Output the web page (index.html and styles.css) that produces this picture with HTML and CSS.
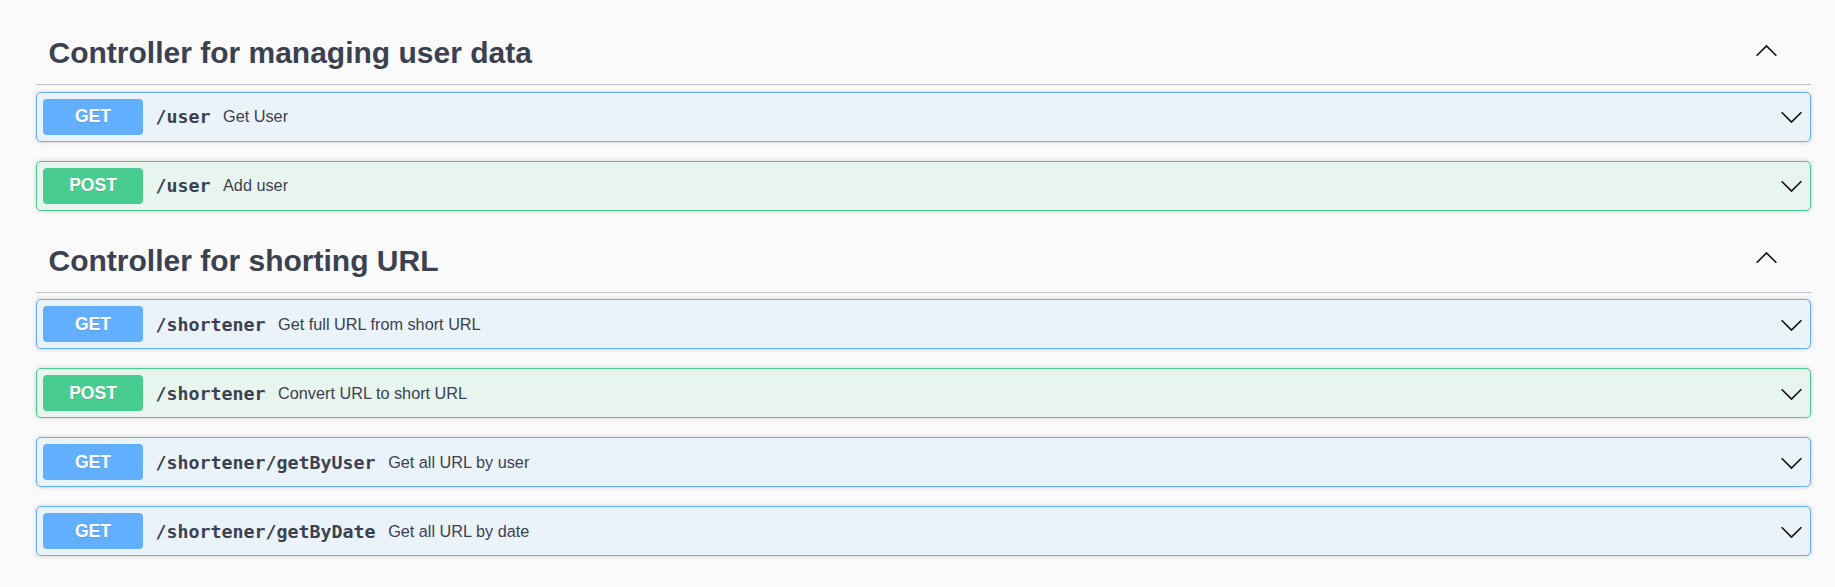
FILE: index.html
```html
<!DOCTYPE html>
<html lang="en">
<head>
<meta charset="utf-8">
<title>Swagger UI</title>
<link rel="stylesheet" href="styles.css">
</head>
<body>
<div class="wrapper">
  <section class="tag-section">
    <div class="tag">
      <h3 class="tag-title">Controller for managing user data</h3>
      <svg class="arrow arrow-up" viewBox="0 0 20 20" width="25" height="25"><polyline points="2.1,13.4 10,5.6 17.9,13.4"/></svg>
    </div>
    <div class="op op-get">
      <span class="method">GET</span>
      <span class="path">/user</span>
      <span class="desc">Get User</span>
      <svg class="arrow" viewBox="0 0 20 20" width="25" height="25"><polyline points="2.1,6.6 10,14.4 17.9,6.6"/></svg>
    </div>
    <div class="op op-post">
      <span class="method">POST</span>
      <span class="path">/user</span>
      <span class="desc">Add user</span>
      <svg class="arrow" viewBox="0 0 20 20" width="25" height="25"><polyline points="2.1,6.6 10,14.4 17.9,6.6"/></svg>
    </div>
  </section>
  <section class="tag-section">
    <div class="tag">
      <h3 class="tag-title">Controller for shorting URL</h3>
      <svg class="arrow arrow-up" viewBox="0 0 20 20" width="25" height="25"><polyline points="2.1,13.4 10,5.6 17.9,13.4"/></svg>
    </div>
    <div class="op op-get">
      <span class="method">GET</span>
      <span class="path">/shortener</span>
      <span class="desc">Get full URL from short URL</span>
      <svg class="arrow" viewBox="0 0 20 20" width="25" height="25"><polyline points="2.1,6.6 10,14.4 17.9,6.6"/></svg>
    </div>
    <div class="op op-post">
      <span class="method">POST</span>
      <span class="path">/shortener</span>
      <span class="desc">Convert URL to short URL</span>
      <svg class="arrow" viewBox="0 0 20 20" width="25" height="25"><polyline points="2.1,6.6 10,14.4 17.9,6.6"/></svg>
    </div>
    <div class="op op-get">
      <span class="method">GET</span>
      <span class="path">/shortener/getByUser</span>
      <span class="desc">Get all URL by user</span>
      <svg class="arrow" viewBox="0 0 20 20" width="25" height="25"><polyline points="2.1,6.6 10,14.4 17.9,6.6"/></svg>
    </div>
    <div class="op op-get">
      <span class="method">GET</span>
      <span class="path">/shortener/getByDate</span>
      <span class="desc">Get all URL by date</span>
      <svg class="arrow" viewBox="0 0 20 20" width="25" height="25"><polyline points="2.1,6.6 10,14.4 17.9,6.6"/></svg>
    </div>
  </section>
</div>
</body>
</html>
```
FILE: styles.css
```css
* { box-sizing: border-box; }
html, body {
  margin: 0;
  padding: 0;
  background: #fafafa;
  font-family: "Liberation Sans", Arial, sans-serif;
  color: #3b4151;
}
.wrapper {
  padding: 22px 24px 0 36px;
}
.tag-section {
  display: flex;
  flex-direction: column;
}
.tag {
  display: flex;
  align-items: center;
  padding: 12px 25px 12px 12.5px;
  border-bottom: 1px solid #c1c3c7;
  margin-bottom: 6.5px;
}
.tag-title {
  flex: 1;
  margin: 0;
  font-size: 30px;
  line-height: 38px;
  font-weight: 700;
  color: #3b4151;
}
.arrow {
  flex: none;
  display: block;
  fill: none;
  stroke: #111;
  stroke-width: 1.3;
}
.arrow-up {
  margin-right: 7px;
  margin-bottom: 4px;
}
.op {
  display: flex;
  align-items: center;
  padding: 6px;
  margin-bottom: 19px;
  border: 1px solid;
  border-radius: 5px;
  box-shadow: 0 0 4px rgba(0, 0, 0, 0.19);
}
.op-get {
  background: #ebf3fa;
  border-color: #61affe;
}
.op-post {
  background: #e8f5ef;
  border-color: #49cc90;
}
.method {
  flex: none;
  min-width: 100px;
  padding: 7.5px 0;
  border-radius: 4px;
  font-size: 17.5px;
  line-height: 21px;
  font-weight: 700;
  color: #fff;
  text-align: center;
  text-shadow: 0 1px 0 rgba(0, 0, 0, 0.1);
}
.op-get .method { background: #61affe; }
.op-post .method { background: #49cc90; }
.path {
  flex: none;
  padding: 0 12.5px;
  font-family: "DejaVu Sans Mono", "Liberation Mono", monospace;
  font-size: 18.3px;
  font-weight: 700;
  color: #3b4151;
}
.desc {
  flex: 1;
  font-size: 16.25px;
  color: #3b4151;
}
```
